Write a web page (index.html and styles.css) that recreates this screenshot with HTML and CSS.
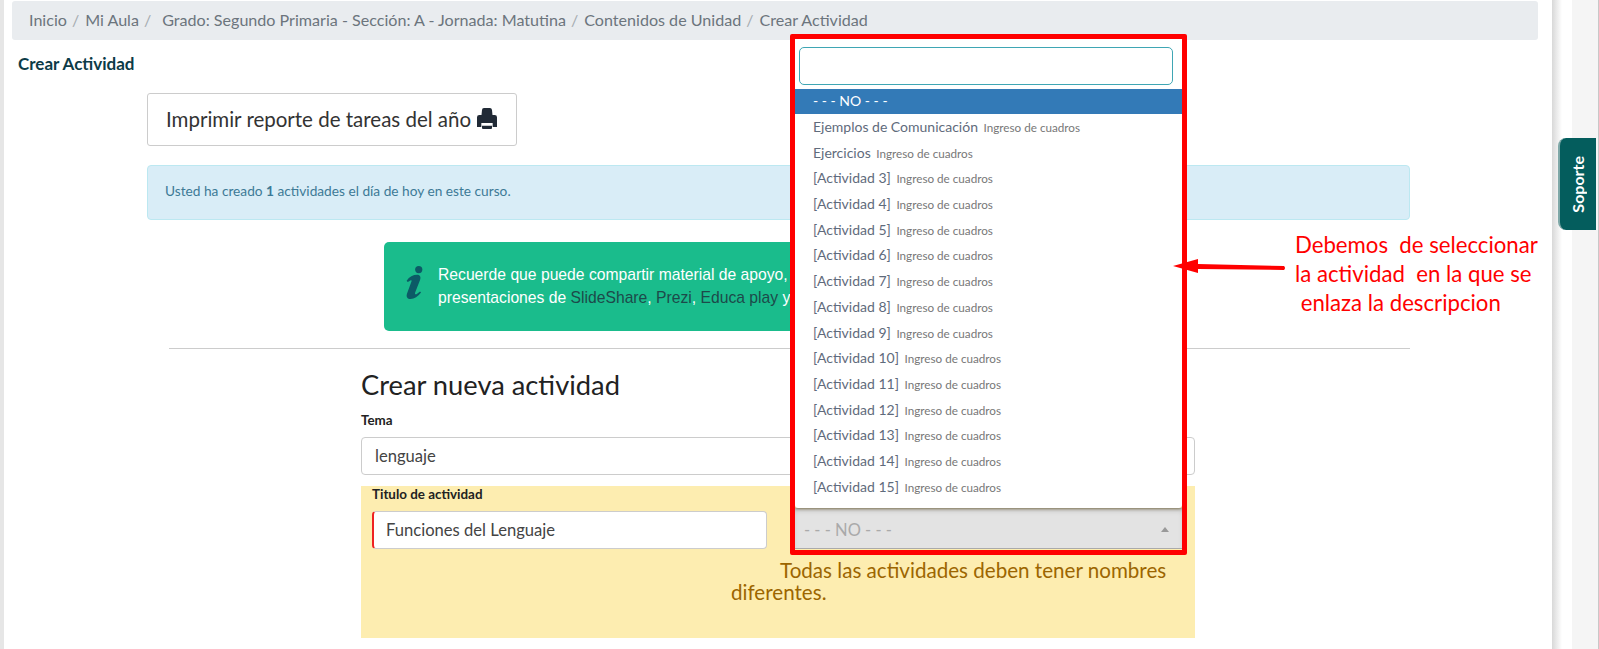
FILE: index.html
```html
<!DOCTYPE html>
<html lang="es">
<head>
<meta charset="utf-8">
<title>Crear Actividad</title>
<link rel="stylesheet" href="styles.css">
</head>
<body>
<div class="page">
  <main class="main">
    <nav class="crumbs">
      <span class="crumb">Inicio</span><span class="sep">/</span>
      <span class="crumb">Mi Aula</span><span class="sep">/</span>
      <span class="crumb crumb-gap">Grado: Segundo Primaria - Sección: A - Jornada: Matutina</span><span class="sep">/</span>
      <span class="crumb">Contenidos de Unidad</span><span class="sep">/</span>
      <span class="crumb">Crear Actividad</span>
    </nav>
    <h4 class="page-title">Crear Actividad</h4>
    <div class="col">
      <button class="print-btn">Imprimir reporte de tareas del año
        <svg class="print-icon" viewBox="0 0 60 63"><path d="M15 6q0-6 6-6h18q5 0 6 6l2 20H13z"/><path d="M7 21H53q7 0 7 7V57H47V45H13V57H0V28q0-7 7-7z"/><path d="M15 53H45V60q0 3-3 3H18q-3 0-3-3z"/></svg>
      </button>
      <div class="alert-info">Usted ha creado <b>1</b> actividades el día de hoy en este curso.</div>
      <div class="alert-green">
        <svg class="info-icon" viewBox="75 75 55 105"><circle cx="117" cy="88" r="11"/><path d="M80 122C88 110 100 104 112 104C122 104 124 112 121 120L106 158C104 164 108 165 112 162L121 155L124 158C114 170 104 178 92 178C82 178 78 172 81 162L95 124C96 120 92 120 88 124L83 126Z"/></svg>
        <p class="green-text">Recuerde que puede compartir material de apoyo,<br>presentaciones de <a>SlideShare</a>, <a>Prezi</a>, <a>Educa play</a> y</p>
      </div>
    </div>
    <hr class="rule">
    <section class="form">
      <h3 class="form-title">Crear nueva actividad</h3>
      <label class="label">Tema</label>
      <div class="input input-tema">lenguaje</div>
      <div class="yellow">
        <label class="label label-y">Titulo de actividad</label>
        <div class="yellow-row">
          <div class="input input-title">Funciones del Lenguaje</div>
          <div class="help-col">
            <div class="select-spacer"></div>
            <p class="help">Todas las actividades deben tener nombres diferentes.</p>
          </div>
        </div>
      </div>
    </section>
  </main>
  <aside class="gutter"></aside>
</div>

<div class="select-closed"><span>- - - NO - - -</span><i class="caret"></i></div>
<div class="dropdown">
  <div class="search-box"></div>
  <ul class="opts">
    <li class="opt opt-on">- - - NO - - -</li>
    <li class="opt">Ejemplos de Comunicación <small>Ingreso de cuadros</small></li>
    <li class="opt">Ejercicios <small>Ingreso de cuadros</small></li>
    <li class="opt">[Actividad 3] <small>Ingreso de cuadros</small></li>
    <li class="opt">[Actividad 4] <small>Ingreso de cuadros</small></li>
    <li class="opt">[Actividad 5] <small>Ingreso de cuadros</small></li>
    <li class="opt">[Actividad 6] <small>Ingreso de cuadros</small></li>
    <li class="opt">[Actividad 7] <small>Ingreso de cuadros</small></li>
    <li class="opt">[Actividad 8] <small>Ingreso de cuadros</small></li>
    <li class="opt">[Actividad 9] <small>Ingreso de cuadros</small></li>
    <li class="opt">[Actividad 10] <small>Ingreso de cuadros</small></li>
    <li class="opt">[Actividad 11] <small>Ingreso de cuadros</small></li>
    <li class="opt">[Actividad 12] <small>Ingreso de cuadros</small></li>
    <li class="opt">[Actividad 13] <small>Ingreso de cuadros</small></li>
    <li class="opt">[Actividad 14] <small>Ingreso de cuadros</small></li>
    <li class="opt">[Actividad 15] <small>Ingreso de cuadros</small></li>
  </ul>
</div>
<div class="red-frame"></div>
<svg class="arrow" viewBox="0 0 113 15"><path d="M0 7L25 0V5L111 7Q113 9 111 11L25 10V14Z"/></svg>
<p class="note">Debemos  de seleccionar
la actividad  en la que se
 enlaza la descripcion</p>
<div class="support"><span class="support-text">Soporte</span></div>
</body>
</html>
```
FILE: styles.css
```css
* { box-sizing: border-box; }
html, body { margin: 0; padding: 0; height: 649px; overflow: hidden; background: #fff; }
body { font-family: Lato, "Noto Sans", sans-serif; color: #212529; font-size: 14px; position: relative; }
.page { display: flex; height: 649px; }
.main { width: 1552px; flex: none; padding: 1px 14px 0 8px; background: #fff; border-left: 4px solid #e6e6e6; }
.gutter {
  flex: 1; border-right: 1px solid #c8c8c8;
  background:
    linear-gradient(90deg, #d8d8d8, #fff 10px) 0 0 / 21px 100% no-repeat,
    #f5f5f5;
  box-shadow: inset -26px 0 0 #f5f5f5;
}
.crumbs { height: 39px; width: 1526px; background: #e9ecef; border-radius: 3px; padding: 0 17px 3px; display: flex; align-items: center; font-size: 16.1px; color: #6c757d; white-space: pre; }
.sep { margin: 0 6px 0 5px; color: #a5abb0; }
.crumb-gap { margin-left: 5px; }
.page-title { margin: 14px 0 0 6px; font-size: 17px; line-height: 20px; font-weight: 700; color: #0c3b47; }
.col { margin: 19px 0 0 135px; width: 1263px; }
.print-btn { display: flex; align-items: center; gap: 6px; width: 370px; height: 53px; padding: 0 0 2px 18px; background: #fff; border: 1px solid #ccc; border-radius: 3px; font: inherit; font-size: 20.5px; color: #333; }
.print-icon { width: 20px; height: 21px; fill: #212a36; flex: none; }
.alert-info { margin-top: 19px; height: 55px; padding: 0 17px 4px; display: flex; align-items: center; white-space: pre; background: #d9edf7; border: 1px solid #bce8f1; border-radius: 4px; color: #3d7a96; font-size: 13.7px; }
.alert-info b { font-weight: 700; }
.alert-green { margin: 22px 0 0 237px; width: 420px; height: 89px; background: #1abc8c; border-radius: 5px; display: flex; color: #fff; padding: 0 0 0 21px; }
.info-icon { width: 18px; height: 35px; margin-top: 23px; fill: #0c5a66; flex: none; }
.green-text { margin: 21px 0 0 15px; font-family: "Liberation Sans", sans-serif; font-size: 15.7px; line-height: 23px; white-space: nowrap; }
.green-text a { color: #1d4a4a; }
.rule { margin: 17px 0 0 157px; width: 1241px; border: 0; border-top: 1px solid #ccc; height: 1px; }
.form { margin: 0 0 0 349px; width: 834px; }
.form-title { margin: 20px 0 0; font-size: 27.3px; line-height: 32px; font-weight: 400; color: #222; }
.label { display: block; font-size: 13.4px; font-weight: 700; line-height: 16px; color: #222; margin-top: 11px; }
.input { height: 38px; background: #fff; border: 1px solid #ccc; border-radius: 4px; padding: 0 13px 1px; display: flex; align-items: center; font-size: 16.6px; color: #444; }
.input-tema { margin-top: 9px; }
.yellow { margin-top: 11px; height: 152px; background: #fdedb0; padding: 0 11px; }
.label-y { margin: 0; }
.yellow-row { display: flex; margin-top: 9px; }
.input-title { width: 395px; border-left: 2px solid #e22; flex: none; padding-left: 12px; }
.help-col { margin-left: -36px; width: 449px; flex: none; }
.select-spacer { height: 38px; }
.help { margin: 10px 0 0; font-size: 20.6px; line-height: 22px; color: #9c6500; text-indent: 49px; }
.select-closed { position: absolute; left: 795px; top: 508px; width: 387px; height: 41px; background: #e3e3e3; border-bottom: 1px solid #aaa; box-shadow: inset 0 4px 6px -3px rgba(0,0,0,.25); padding: 3px 9px 0; display: flex; align-items: center; justify-content: space-between; color: #aaa; font-size: 16.5px; }
.caret { width: 0; height: 0; border: 4px solid transparent; border-bottom: 5px solid #999; border-top: 0; margin-right: 4px; }
.dropdown { position: absolute; left: 795px; top: 39px; width: 387px; height: 469px; background: #fff; box-shadow: 0 1px 3px rgba(80,60,0,.55); border-radius: 0 0 3px 3px; }
.search-box { margin: 8px 9px 0 4px; height: 38px; border: 1px solid #3fa6b4; border-radius: 5px; }
.opts { list-style: none; margin: 4px 0 0; padding: 0; }
.opt { height: 25.7px; line-height: 25px; padding-left: 18px; font-size: 14px; color: #5f6b7c; white-space: pre; }
.opt small { font-size: 11.7px; color: #777; margin-left: 2px; }
.opt-on { background: #337ab7; color: #fff; height: 25px; line-height: 24px; }
.red-frame { position: absolute; left: 790px; top: 34px; width: 397px; height: 521px; border: 5px solid #f00; border-radius: 2px; }
.arrow { position: absolute; left: 1173px; top: 259px; width: 113px; height: 15px; fill: #f00; }
.note { position: absolute; left: 1295px; top: 230px; margin: 0; white-space: pre; font-size: 22.2px; line-height: 29px; color: #f00; }
.support { position: absolute; left: 1558px; top: 138px; width: 38px; height: 92px; background: #045d5d; border-left: 2px solid #7fa8a8; border-radius: 8px 0 0 8px; display: flex; align-items: center; justify-content: center; padding-right: 2px; }
.support-text { writing-mode: vertical-rl; transform: rotate(180deg); color: #fff; font-size: 16px; font-weight: 700; }
```
